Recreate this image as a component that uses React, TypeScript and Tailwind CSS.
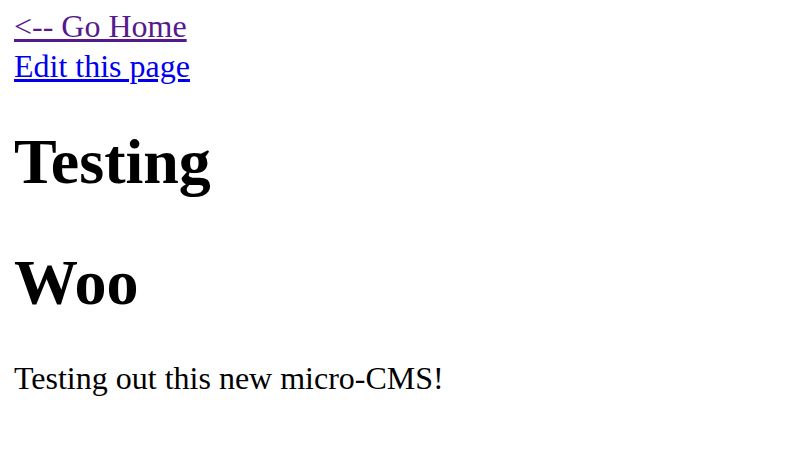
import React from "react";

const App: React.FC = () => {
  return (
    <div className="min-h-[466px] bg-white pl-[14px] pt-[6px] text-black font-['Liberation_Serif','Times_New_Roman',serif]">
      <a href="#" className="block text-[32px] leading-[40px] text-[#551a8b] underline">
        &lt;-- Go Home
      </a>
      <a href="#" className="block text-[32px] leading-[40px] text-[#0000ee] underline">
        Edit this page
      </a>
      <h1 className="mt-[40px] text-[64px] leading-[72px] font-bold">Testing</h1>
      <h1 className="mt-[49px] text-[64px] leading-[72px] font-bold">Woo</h1>
      <p className="mt-[39px] text-[32px] leading-[40px]">Testing out this new micro-CMS!</p>
    </div>
  );
};

export default App;
